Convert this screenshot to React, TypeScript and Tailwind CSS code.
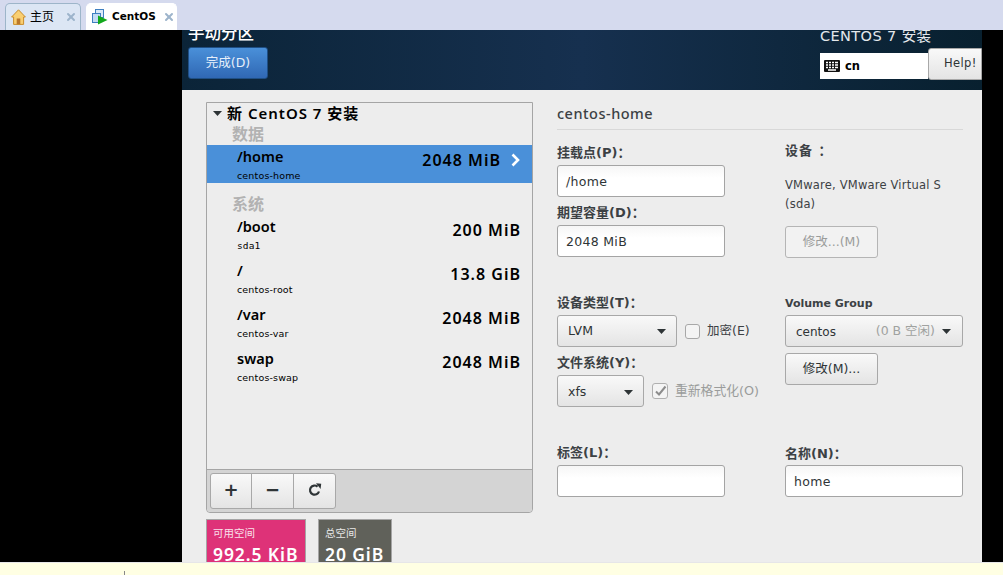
import { ReactNode } from "react"
import { X } from "lucide-react"

const FONT = "font-['DejaVu_Sans','Noto_Sans_CJK_SC',sans-serif]"
const SEMI = "font-['Noto_Sans','Noto_Sans_CJK_SC',sans-serif] font-semibold"

function Caret() {
  return (
    <svg width="9" height="5" viewBox="0 0 9 5" className="shrink-0">
      <path d="M0 0h9L4.5 5z" fill="#2e3436" />
    </svg>
  )
}

function HomeIcon() {
  return (
    <svg width="15" height="16" viewBox="0 0 15 16">
      <path d="M7.5 .8 .6 8h2v7.4h10V8h1.8z" fill="#f9cf72" stroke="#c98d2c" strokeWidth="1" />
      <rect x="5.7" y="9.5" width="3.6" height="5.8" fill="#b9772a" />
    </svg>
  )
}

function VmIcon() {
  return (
    <svg width="16" height="16" viewBox="0 0 16 16">
      <rect x="3.5" y=".5" width="8" height="8" fill="#dbe9f8" stroke="#3f7fc0" />
      <rect x=".5" y="4.5" width="8" height="9" fill="#c3dbf4" stroke="#3f7fc0" />
      <path d="M6 6.5 15.5 11 6 15.5z" fill="#12a81c" />
    </svg>
  )
}

function Tab({ icon, label, active }: { icon: ReactNode; label: string; active?: boolean }) {
  return (
    <div
      className={`flex h-[27px] items-center rounded-t-[5px] border border-b-0 pl-[5px] text-black ${
        active ? "w-[91px] border-white bg-white" : "w-[76px] border-[#9db5c9] bg-[#dce6f4]"
      }`}
    >
      {icon}
      {active ? (
        <span className="ml-[4px] w-[51px] text-[10.5px] font-bold">{label}</span>
      ) : (
        <span className="ml-[4px] w-[35px] text-[12px]">{label}</span>
      )}
      <X size={12} strokeWidth={4} className="text-[#9db4cb]" />
    </div>
  )
}

function FieldLabel({ children, className = "" }: { children: ReactNode; className?: string }) {
  return <div className={`text-[13px] leading-[18px] font-bold text-[#3c4144] ${className}`}>{children}</div>
}

function TextBox({ value, className = "" }: { value?: string; className?: string }) {
  return (
    <div className={`flex h-[32px] items-center rounded-[3px] border border-[#a4a4a4] bg-gradient-to-b from-[#f6f6f6] to-white to-40% px-[8px] pt-[2px] text-[12.5px] tracking-[0.3px] text-[#2e3436] ${className}`}>
      {value}
    </div>
  )
}

function Btn({ children, disabled, className = "" }: { children: ReactNode; disabled?: boolean; className?: string }) {
  return (
    <div
      className={`flex h-[32px] items-center justify-center rounded-[3px] border text-[12.5px] ${
        disabled
          ? "border-[#b5b5b5] bg-[#f2f2f2] text-[#9a9c9b]"
          : "border-[#a8a8a8] bg-gradient-to-b from-[#f9f9f9] to-[#e4e4e4] text-[#2e3436]"
      } ${className}`}
    >
      {children}
    </div>
  )
}

function Row({ name, sub, size, selected, mono }: { name: string; sub: string; size: string; selected?: boolean; mono?: boolean }) {
  return (
    <div className={`flex h-[38px] items-start ${selected ? "bg-[#4a90d9]" : ""} pr-[11px] pl-[30px] text-black`}>
      <div className="flex-1">
        <div className={`mt-[1px] text-[14.5px] leading-[20px] ${SEMI}`}>{name}</div>
        <div className={`mt-[3px] text-[9.5px] leading-[13px] tracking-[0.15px] ${mono ? "font-['DejaVu_Sans_Mono']" : ""}`}>{sub}</div>
      </div>
      <div className={`mt-[5px] flex items-center text-[16px] leading-[20px] tracking-[1px] ${SEMI}`}>
        {size}
        {selected && (
          <svg width="11" height="14" viewBox="0 0 11 14" className="ml-[9px]">
            <path d="M2.5 1.5 8 7l-5.5 5.5" fill="none" stroke="#fff" strokeWidth="2.6" />
          </svg>
        )}
      </div>
    </div>
  )
}

function Stat({ label, value, className }: { label: string; value: string; className: string }) {
  return (
    <div className={`border border-b-0 border-[#a5a5a5] pt-[6px] pl-[6px] text-white ${className}`}>
      <div className="text-[10.5px] leading-[14px] opacity-85">{label}</div>
      <div className={`mt-[3px] text-[17.5px] leading-[22px] tracking-[0.9px] whitespace-nowrap ${SEMI}`}>{value}</div>
    </div>
  )
}

export default function App() {
  return (
    <div className={`flex h-[575px] w-[1003px] flex-col overflow-hidden bg-black ${FONT}`}>
      {/* vmware tabs */}
      <div className="flex h-[30px] shrink-0 items-end gap-[5px] bg-[#d5daee] pl-[5px]">
        <Tab icon={<HomeIcon />} label="主页" />
        <Tab icon={<VmIcon />} label="CentOS" active />
      </div>

      <div className="flex h-[532px] shrink-0">
        <div className="w-[182px] shrink-0 bg-black" />
        <div className="flex w-[800px] shrink-0 flex-col overflow-hidden">
          {/* header */}
          <div className="flex h-[60px] shrink-0 justify-between overflow-hidden bg-gradient-to-r from-[#0b2438] via-[#16304f] to-[#08202f] pl-[6px] text-white">
            <div>
              <div className="mt-[-7px] text-[16.5px] leading-[22px] font-medium">手动分区</div>
              <Btn className="mt-[2px] w-[80px] !rounded-[3px] !border-[#1f4f85] !bg-gradient-to-b !from-[#4a90d9] !to-[#3068b4] !text-[#e6effa]">完成(D)</Btn>
            </div>
            <div className="w-[162px]">
              <div className="mt-[-3px] text-[14.5px] leading-[18px] tracking-[0.4px] text-[#e4e8ec]">CENTOS 7 安装</div>
              <div className="mt-[3px] flex h-[32px]">
                <div className="mt-[5px] flex h-[26px] w-[108px] items-center bg-white pl-[4px]">
                  <svg width="16" height="13" viewBox="0 0 16 13">
                    <rect width="16" height="12" rx="1" fill="#111" />
                    <path d="M2 2.5h2M5 2.5h2M8 2.5h2M11 2.5h3M2 5h2M5 5h2M8 5h2M11 5h3M2 7.5h2M5 7.5h2M8 7.5h2M11 7.5h3M4 10h8" stroke="#fff" strokeWidth="1.4" />
                  </svg>
                  <span className="ml-[5px] pt-[2px] text-[11.5px] font-bold text-black">cn</span>
                </div>
                <div className="flex h-[32px] w-[54px] items-center rounded-l-[3px] border border-[#a8a8a8] bg-gradient-to-b from-[#f9f9f9] to-[#e4e4e4] pl-[15px] text-[11.5px] tracking-[0.4px] text-[#2e3436]">
                  Help!
                </div>
              </div>
            </div>
          </div>

          {/* body */}
          <div className="flex flex-1 bg-[#ededed] pt-[12px] pl-[24px]">
            {/* left column */}
            <div className="w-[327px] shrink-0">
              <div className="flex h-[411px] flex-col rounded-b-[4px] border border-[#a5a5a5]">
                <div className="flex-1 overflow-hidden">
                  <div className={`flex h-[22px] items-center pb-[2px] pl-[6px] text-[15px] tracking-[1px] text-black ${SEMI}`}>
                    <Caret />
                    <span className="ml-[5px]">新 CentOS 7 安装</span>
                  </div>
                  <div className="h-[20px] pl-[25px] text-[16px] leading-[20px] font-semibold text-[#b2b2b2]">数据</div>
                  <Row name="/home" sub="centos-home" size="2048 MiB" selected />
                  <div className="h-[30px] pt-[12px] pl-[25px] text-[16px] leading-[20px] font-semibold text-[#b2b2b2]">系统</div>
                  <div className="mt-[2px] flex flex-col gap-[6px]">
                    <Row name="/boot" sub="sda1" size="200 MiB" mono />
                    <Row name="/" sub="centos-root" size="13.8 GiB" />
                    <Row name="/var" sub="centos-var" size="2048 MiB" />
                    <Row name="swap" sub="centos-swap" size="2048 MiB" />
                  </div>
                </div>
                <div className="flex h-[43px] shrink-0 items-center rounded-b-[4px] border-t border-[#a5a5a5] bg-[#d4d4d4] pl-[3px]">
                  <div className="flex h-[36px] w-[126px] rounded-[3px] border border-[#a8a8a8] bg-gradient-to-b from-[#f9f9f9] to-[#e4e4e4] text-[#2e3436]">
                    <div className="flex w-[41px] items-center justify-center border-r border-[#a8a8a8] pb-[3px] text-[18px] font-bold">+</div>
                    <div className="flex w-[42px] items-center justify-center border-r border-[#a8a8a8] pb-[3px] text-[18px] font-bold">−</div>
                    <div className="flex flex-1 items-center justify-center pb-[3px]">
                      <svg width="14" height="14" viewBox="0 0 14 14">
                        <path d="M11 8.5A4.6 4.6 0 1 1 9.6 3.6" fill="none" stroke="#2e3436" strokeWidth="2.2" />
                        <path d="M8 .3 13.2 .8 12.6 6z" fill="#2e3436" />
                      </svg>
                    </div>
                  </div>
                </div>
              </div>
              <div className="mt-[6px] flex h-[43px] gap-[12px] overflow-hidden">
                <Stat label="可用空间" value="992.5 KiB" className="w-[100px] bg-[#de3278]" />
                <Stat label="总空间" value="20 GiB" className="w-[74px] bg-[#60615a]" />
              </div>
            </div>

            {/* right column */}
            <div className="ml-[24px] w-[406px] shrink-0">
              <div className="h-[28px] border-b border-[#d8d8d8] font-['Noto_Sans','Noto_Sans_CJK_SC',sans-serif] text-[14.5px] leading-[22px] font-medium tracking-[0.5px] text-[#3c4144]">centos-home</div>
              <div className="mt-[14px] flex">
                <div className="w-[228px] shrink-0">
                  <FieldLabel>挂载点(P)：</FieldLabel>
                  <TextBox value="/home" className="mt-[3px] w-[168px]" />
                  <FieldLabel className="mt-[7px]">期望容量(D)：</FieldLabel>
                  <TextBox value="2048 MiB" className="mt-[3px] w-[168px]" />

                  <FieldLabel className="mt-[37px]">设备类型(T)：</FieldLabel>
                  <div className="mt-[3px] flex items-center">
                    <Btn className="w-[120px] !justify-between px-[10px] pt-[1px]">
                      <span>LVM</span>
                      <Caret />
                    </Btn>
                    <div className="ml-[8px] h-[15px] w-[15px] rounded-[3px] border border-[#a8a8a8] bg-[#f4f4f4]" />
                    <span className="ml-[7px] text-[12.5px] text-[#3c4144]">加密(E)</span>
                  </div>
                  <FieldLabel className="mt-[7px]">文件系统(Y)：</FieldLabel>
                  <div className="mt-[3px] flex items-center">
                    <Btn className="w-[87px] !justify-between px-[10px] pt-[2px]">
                      <span>xfs</span>
                      <Caret />
                    </Btn>
                    <div className="ml-[8px] flex h-[16px] w-[16px] items-center justify-center rounded-[3px] border border-[#b0b0b0] bg-[#f4f4f4]">
                      <svg width="13" height="12" viewBox="0 0 13 12">
                        <path d="M2 6.5 5 9.5 11.5 1.5" fill="none" stroke="#8c8c8c" strokeWidth="2" />
                      </svg>
                    </div>
                    <span className="ml-[7px] text-[12.8px] text-[#9a9c9b]">重新格式化(O)</span>
                  </div>

                  <FieldLabel className="mt-[37px]">标签(L)：</FieldLabel>
                  <TextBox className="mt-[3px] w-[168px]" />
                </div>

                <div className="w-[178px] shrink-0">
                  <FieldLabel className="!leading-[14px] tracking-[1px]">设备 ：</FieldLabel>
                  <div className="mt-[18px] text-[11.5px] leading-[19px] tracking-[0.2px] whitespace-nowrap text-[#3c4144]">
                    VMware, VMware Virtual S
                    <br />
                    (sda)
                  </div>
                  <Btn disabled className="mt-[12px] w-[93px]">修改...(M)</Btn>

                  <FieldLabel className="mt-[37px] !text-[11px]">Volume Group</FieldLabel>
                  <div className="mt-[2px] flex h-[32px] items-center rounded-[3px] border border-[#a8a8a8] bg-gradient-to-b from-[#f9f9f9] to-[#e4e4e4] pt-[1px] pr-[11px] pl-[10px] text-[12px] text-[#2e3436]">
                    <span className="flex-1">centos</span>
                    <span className="mr-[7px] text-[12.5px] text-[#a0a2a0]">(0 B 空闲)</span>
                    <Caret />
                  </div>
                  <Btn className="mt-[6px] w-[93px]">修改(M)...</Btn>

                  <FieldLabel className="mt-[60px]">名称(N)：</FieldLabel>
                  <TextBox value="home" className="mt-[2px] w-[178px]" />
                </div>
              </div>
            </div>
          </div>
        </div>
        <div className="flex-1 bg-black" />
      </div>

      {/* status strip */}
      <div className="h-[13px] shrink-0 border-t border-[#e6e6e8] bg-[#ffffe3] pt-[8px] pl-[124px]">
        <div className="h-[4px] w-[1px] bg-[#888]" />
      </div>
    </div>
  )
}
